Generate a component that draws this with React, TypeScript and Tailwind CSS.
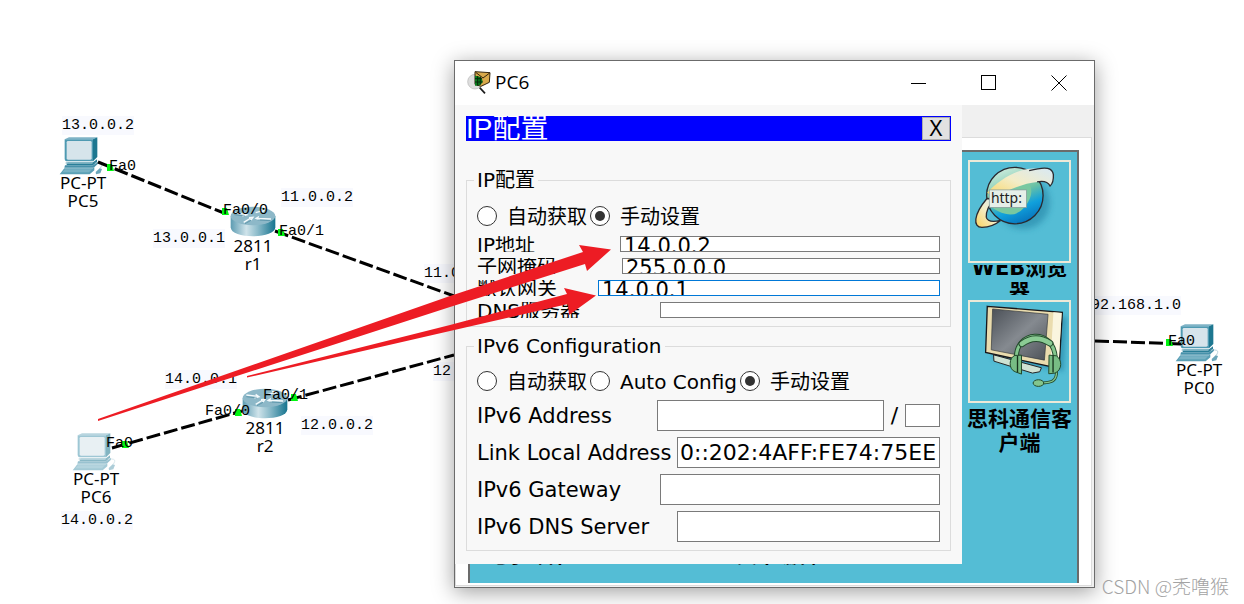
import { useState } from "react";
import type { ReactNode } from "react";
import clsx from "clsx";

interface Device {
  kind: "pc" | "router";
  model: string;
  name: string;
  x: number;
  y: number;
  faded?: boolean;
}

interface CanvasLabel {
  text: string;
  x: number;
  y: number;
}

const devices: Device[] = [
  { kind: "pc", model: "PC-PT", name: "PC5", x: 83, y: 137 },
  { kind: "router", model: "2811", name: "r1", x: 253, y: 206 },
  { kind: "pc", model: "PC-PT", name: "PC6", x: 96, y: 433, faded: true },
  { kind: "router", model: "2811", name: "r2", x: 265, y: 388 },
  { kind: "pc", model: "PC-PT", name: "PC0", x: 1199, y: 324 },
];

const addresses: CanvasLabel[] = [
  { text: "13.0.0.2", x: 62, y: 116 },
  { text: "13.0.0.1", x: 153, y: 229 },
  { text: "11.0.0.2", x: 281, y: 188 },
  { text: "11.0.0.1", x: 424, y: 264 },
  { text: "14.0.0.1", x: 165, y: 370 },
  { text: "12.0.0.2", x: 301, y: 416 },
  { text: "12.0.0.1", x: 433, y: 362 },
  { text: "14.0.0.2", x: 61, y: 511 },
  { text: "192.168.1.0", x: 1082, y: 296 },
];

const ports: CanvasLabel[] = [
  { text: "Fa0", x: 109, y: 157 },
  { text: "Fa0/0", x: 223, y: 201 },
  { text: "Fa0/1", x: 279, y: 222 },
  { text: "Fa0/0", x: 205, y: 402 },
  { text: "Fa0/1", x: 263, y: 386 },
  { text: "Fa0", x: 106, y: 434 },
  { text: "Fa0", x: 1168, y: 332 },
];

const links = [
  [98, 162, 224, 213],
  [275, 231, 454, 296],
  [112, 448, 242, 411],
  [288, 400, 454, 355],
  [1095, 341, 1182, 344],
];

const lights = [
  [110, 168],
  [225, 212],
  [281, 233],
  [238, 413],
  [294, 398],
  [125, 445],
  [1169, 343],
];

function PcIcon({ faded }: { faded?: boolean }) {
  return (
    <svg
      width="44"
      height="38"
      viewBox="58 112 132 114"
      className={clsx("mr-1 -mb-px", faded && "opacity-55")}
      aria-hidden="true"
    >
      <path d="M75 119 88 113H173L160 119Z" fill="#7fb3c6" />
      <path d="M160 119 173 113V172L160 185Z" fill="#1d7790" />
      <path d="M75 119H160V185H80Q75 184 75 178Z" fill="#4f9ab2" />
      <rect x="81" y="124" width="75" height="56" rx="4" fill="#d6e4eb" />
      <path d="M84 188H160L172 179V187L160 197H80Z" fill="#2a7f98" />
      <path d="M78 188H160L158 192H78Z" fill="#8fbccb" />
      <path d="M76 197H160L175 186V192L162 204H74Z" fill="#4691aa" />
      <path d="M74 206H160L164 203V212L150 224H60Z" fill="#5ba0b6" />
      <path d="M76 209H157L148 218H68Z" fill="#78b2c4" />
      <path d="M165 190Q190 188 186 198T180 206" fill="none" stroke="#9fc1cd" strokeWidth="2" />
      <path d="M180 206 187 208 182 221 169 224 168 217Z" fill="#6ba6ba" />
    </svg>
  );
}

function RouterIcon({ id }: { id: string }) {
  return (
    <svg width="46" height="32" viewBox="29 112 138 94" className="-mb-px" aria-hidden="true">
      <defs>
        <linearGradient id={id} x1="0" x2="1">
          <stop offset="0" stopColor="#5d9cb2" />
          <stop offset="0.35" stopColor="#cfe3ea" />
          <stop offset="0.6" stopColor="#8dbccb" />
          <stop offset="1" stopColor="#16748f" />
        </linearGradient>
      </defs>
      <path d="M31 141V175C31 211 165 211 165 175V141Z" fill={`url(#${id})`} />
      <ellipse cx="98" cy="141" rx="67" ry="28" fill="#8db8c8" />
      <path
        d="M42 132 76 136M70 130 80 137 66 141M70 160 88 149 94 152M86 146 98 145 92 153M110 148 152 150M116 143 107 148 118 153M106 131 130 124M119 121 132 123 126 130"
        fill="none"
        stroke="#f4fafc"
        strokeWidth="4"
      />
      <path d="M42 137 74 141M74 164 92 154M112 153 150 155" stroke="#4b8aa0" strokeWidth="2" />
    </svg>
  );
}

function Topology() {
  return (
    <>
      {devices.map((d) => (
        <div
          key={d.name}
          className="absolute flex w-20 -translate-x-1/2 flex-col items-center font-['Noto_Sans',sans-serif] text-[17px] leading-[18px] text-black"
          style={{ left: d.x, top: d.y }}
        >
          {d.kind === "pc" ? <PcIcon faded={d.faded} /> : <RouterIcon id={`body-${d.name}`} />}
          <span>{d.model}</span>
          <span>{d.name}</span>
        </div>
      ))}

      <svg className="absolute inset-0 size-full" aria-hidden="true">
        {links.map(([x1, y1, x2, y2]) => (
          <line
            key={`${x1}-${y1}`}
            x1={x1}
            y1={y1}
            x2={x2}
            y2={y2}
            stroke="#000"
            strokeWidth="3"
            strokeDasharray="14 4"
          />
        ))}
        {lights.map(([x, y]) => (
          <path
            key={`${x}-${y}`}
            d={`M${x - 3} ${y - 4}H${x + 2}L${x + 4} ${y + 3}H${x - 3}Z`}
            fill="#00f510"
          />
        ))}
      </svg>

      {addresses.map((l) => (
        <span
          key={`${l.text}-${l.x}`}
          className="absolute bg-[#f8f9fe] font-['Liberation_Mono',monospace] text-[15px] leading-[19px] text-black"
          style={{ left: l.x, top: l.y }}
        >
          {l.text}
        </span>
      ))}
      {ports.map((l) => (
        <span
          key={`${l.text}-${l.x}`}
          className="absolute font-['Liberation_Mono',monospace] text-[15px] leading-[19px] text-black"
          style={{ left: l.x, top: l.y }}
        >
          {l.text}
        </span>
      ))}
    </>
  );
}

function AppIcon() {
  return (
    <svg width="24" height="24" viewBox="0 0 72 72" aria-hidden="true">
      <circle cx="24" cy="32" r="22" fill="#dedede" stroke="#b5b5b5" strokeWidth="2" />
      <path d="M24 2 69 5 67 34 42 46 24 40Z" fill="#d9a94a" stroke="#33240c" strokeWidth="3" />
      <path d="M26 4 48 21 68 6" fill="none" stroke="#33240c" strokeWidth="3" />
      <path d="M24 14Q46 14 47 32 42 45 24 44Z" fill="#0a7a1c" />
      <path d="M32 15V44M40 17V41M24 23H45M24 33H47" stroke="#04290a" strokeWidth="3" />
      <path d="M38 50 54 67" stroke="#1c1c1c" strokeWidth="5" />
    </svg>
  );
}

function BrowserIcon() {
  return (
    <svg viewBox="30 36 298 298" className="size-full" aria-hidden="true">
      <defs>
        <linearGradient id="globe" x1="0.2" y1="0" x2="0.6" y2="1">
          <stop offset="0" stopColor="#d5efe2" />
          <stop offset="0.5" stopColor="#6bc2a4" />
          <stop offset="0.75" stopColor="#10a0dc" />
          <stop offset="1" stopColor="#0876bd" />
        </linearGradient>
        <linearGradient id="ring" x1="0" y1="1" x2="1" y2="0">
          <stop offset="0" stopColor="#fbd35c" />
          <stop offset="0.5" stopColor="#f3edc8" />
          <stop offset="1" stopColor="#d7e9f6" />
        </linearGradient>
        <filter id="soft">
          <feGaussianBlur stdDeviation="10" />
        </filter>
      </defs>
      <circle cx="190" cy="158" r="80" fill="#2383a5" opacity="0.6" filter="url(#soft)" />
      <circle cx="165" cy="137" r="85" fill="url(#globe)" stroke="#2a2a30" strokeWidth="4" />
      <path d="M100 176Q160 214 194 172T206 98L104 146Z" fill="#79c8a0" />
      <path
        d="M81 146C40 195 38 232 66 233 90 232 110 222 122 212 100 217 82 215 79 202 78 180 90 162 104 147Z"
        fill="url(#ring)"
        stroke="#2a2a30"
        strokeWidth="4"
      />
      <path
        d="M82 128C122 84 185 50 232 56 265 50 278 56 281 74 282 96 276 104 271 108 265 97 252 92 232 96 190 100 136 122 104 146Z"
        fill="url(#ring)"
      />
      <path
        d="M208 62C262 48 278 54 281 74 282 96 276 104 271 108 265 97 252 92 232 96"
        fill="none"
        stroke="#2a2a30"
        strokeWidth="4"
      />
      <rect x="88" y="120" width="112" height="53" fill="#e6efe8" stroke="#7e9493" strokeWidth="2" />
      <text x="93" y="158" fontSize="42" fontWeight="400" fontFamily="Noto Sans, sans-serif" fill="#222">
        http:
      </text>
    </svg>
  );
}

function CommunicatorIcon() {
  return (
    <svg viewBox="30 36 298 298" className="size-full" aria-hidden="true">
      <defs>
        <linearGradient id="screen" x1="0" y1="0" x2="1" y2="1">
          <stop offset="0" stopColor="#4b5057" />
          <stop offset="0.5" stopColor="#858a90" />
          <stop offset="1" stopColor="#4c5157" />
        </linearGradient>
        <filter id="screen-shadow">
          <feGaussianBlur stdDeviation="8" />
        </filter>
      </defs>
      <path d="M95 65 322 82 312 245 100 210Z" fill="#2383a5" opacity="0.6" filter="url(#screen-shadow)" />
      <path d="M101 195 245 234 240 246 218 250 102 214Z" fill="#cfe2d3" stroke="#252525" strokeWidth="3" />
      <path d="M82 49 308 67 298 236 77 188Z" fill="#eadcae" stroke="#17171a" strokeWidth="4" />
      <path d="M281 67 306 69 296 232 272 226Z" fill="#faf5df" />
      <path d="M98 57 265 73 254 211 94 180Z" fill="url(#screen)" stroke="#34383c" strokeWidth="2" />
      <g fill="none" strokeLinecap="round">
        <path d="M170 204C166 124 282 110 287 206" stroke="#234a2c" strokeWidth="15" />
        <path d="M170 204C166 124 282 110 287 206" stroke="#83c58d" strokeWidth="9" />
        <path d="M186 162Q226 131 271 160" stroke="#234a2c" strokeWidth="20" />
        <path d="M186 162Q226 131 271 160" stroke="#8bcb94" strokeWidth="14" />
        <path d="M290 240C294 280 268 278 244 280" stroke="#234a2c" strokeWidth="9" />
        <path d="M290 240C294 280 268 278 244 280" stroke="#83c58d" strokeWidth="4" />
      </g>
      <path d="M165 197C148 202 144 238 166 246L185 253V196Z" fill="#78bd84" stroke="#234a2c" strokeWidth="3" />
      <path d="M173 198V248" stroke="#18331d" strokeWidth="4" />
      <path d="M268 196 290 198C308 210 308 240 286 250L267 252Z" fill="#78bd84" stroke="#234a2c" strokeWidth="3" />
      <path d="M280 198V248" stroke="#18331d" strokeWidth="4" />
      <ellipse cx="236" cy="280" rx="16" ry="10" fill="#83c58d" stroke="#234a2c" strokeWidth="3" />
    </svg>
  );
}

function Radio({
  name,
  label,
  checked,
  onSelect,
}: {
  name: string;
  label: string;
  checked: boolean;
  onSelect: () => void;
}) {
  return (
    <label className="mr-[3px] flex h-5 items-center gap-[10px] whitespace-nowrap">
      <input
        type="radio"
        name={name}
        checked={checked}
        onChange={onSelect}
        className="grid size-5 appearance-none place-items-center rounded-full border border-[#333] bg-white before:size-[10px] before:rounded-full checked:before:bg-[#333]"
      />
      <span className="pt-[2px]">{label}</span>
    </label>
  );
}

function Group({ title, children }: { title: string; children: ReactNode }) {
  return (
    <fieldset className="min-w-0 border border-[#dcdcdc] px-[10px] pb-2">
      <legend className="-ml-[3px] px-[3px] leading-5">{title}</legend>
      {children}
    </fieldset>
  );
}

function ShortField({
  id,
  label,
  value,
  labelClass,
  active,
}: {
  id: string;
  label: string;
  value: string;
  labelClass: string;
  active?: boolean;
}) {
  return (
    <div className="flex h-4 overflow-hidden">
      <label htmlFor={id} className={clsx("shrink-0 leading-[18px] whitespace-nowrap", labelClass)}>
        {label}
      </label>
      <div
        className={clsx(
          "flex min-w-0 flex-1 items-start overflow-hidden border bg-white px-[3px]",
          active ? "border-[#0078d7]" : "border-[#7a7a7a]",
        )}
      >
        <input
          id={id}
          defaultValue={value}
          className="h-[18px] w-full min-w-0 shrink-0 text-[21px] leading-[18px] outline-none"
        />
      </div>
    </div>
  );
}

function LongField({
  id,
  label,
  value,
  labelClass,
  children,
}: {
  id: string;
  label: string;
  value?: string;
  labelClass: string;
  children?: ReactNode;
}) {
  return (
    <div className="flex h-[31px] items-center">
      <label htmlFor={id} className={clsx("shrink-0 text-[21px] whitespace-nowrap", labelClass)}>
        {label}
      </label>
      <input
        id={id}
        defaultValue={value}
        className="h-full min-w-0 flex-1 border border-[#7a7a7a] bg-white px-[2px] text-[22px] outline-none"
      />
      {children}
    </div>
  );
}

function IpConfiguration() {
  const [v4Mode, setV4Mode] = useState("static");
  const [v6Mode, setV6Mode] = useState("static");

  return (
    <form
      className="absolute top-0 left-0 w-[507px] bg-[#f8f8f8] px-[11px] pt-[11px] pb-[13px] font-['DejaVu_Sans','Noto_Sans_CJK_SC',sans-serif] text-[20px] leading-5 text-black"
      onSubmit={(e) => e.preventDefault()}
    >
      <div className="flex h-[25px] items-center justify-between overflow-hidden bg-[#0000ff] pr-px">
        <h2 className="font-['Liberation_Sans','Noto_Sans_CJK_SC',sans-serif] text-[28px] leading-6 text-white">
          IP配置
        </h2>
        <button
          type="button"
          aria-label="Close"
          className="h-[23px] w-7 border border-[#adadad] bg-[#e1e1e1] pb-1 font-['Noto_Sans',sans-serif] text-[22px] leading-4"
        >
          X
        </button>
      </div>

      <div className="mt-[29px]">
        <Group title="IP配置">
          <div className="mt-4 flex">
            <Radio name="v4" label="自动获取" checked={v4Mode === "dhcp"} onSelect={() => setV4Mode("dhcp")} />
            <Radio name="v4" label="手动设置" checked={v4Mode === "static"} onSelect={() => setV4Mode("static")} />
          </div>
          <div className="mt-[10px] flex flex-col gap-[6px]">
            <ShortField id="ip" label="IP地址" value="14.0.0.2" labelClass="w-[143px]" />
            <ShortField id="mask" label="子网掩码" value="255.0.0.0" labelClass="w-[145px]" />
            <ShortField id="gateway" label="默认网关" value="14.0.0.1" labelClass="w-[121px]" active />
            <ShortField id="dns" label="DNS服务器" value="" labelClass="w-[183px]" />
          </div>
        </Group>
      </div>

      <div className="mt-[9px]">
        <Group title="IPv6 Configuration">
          <div className="mt-[15px] flex">
            <Radio name="v6" label="自动获取" checked={v6Mode === "dhcp"} onSelect={() => setV6Mode("dhcp")} />
            <Radio name="v6" label="Auto Config" checked={v6Mode === "auto"} onSelect={() => setV6Mode("auto")} />
            <Radio name="v6" label="手动设置" checked={v6Mode === "static"} onSelect={() => setV6Mode("static")} />
          </div>
          <div className="mt-[9px] flex flex-col gap-[6px]">
            <LongField id="v6-address" label="IPv6 Address" labelClass="w-[180px]">
              <span className="w-[21px] text-center text-[22px]">/</span>
              <input
                aria-label="Prefix length"
                className="h-[23px] w-[35px] border border-[#7a7a7a] bg-white px-[2px] outline-none"
              />
            </LongField>
            <LongField id="v6-local" label="Link Local Address" value="0::202:4AFF:FE74:75EE" labelClass="w-[200px]" />
            <LongField id="v6-gateway" label="IPv6 Gateway" labelClass="w-[183px]" />
            <LongField id="v6-dns" label="IPv6 DNS Server" labelClass="w-[200px]" />
          </div>
        </Group>
      </div>
    </form>
  );
}

function PcWindow() {
  return (
    <section className="absolute top-[60px] left-[454px] flex h-[528px] w-[641px] flex-col border border-[#6b6b6b] bg-[#f0f0f0] shadow-[0_4px_20px_rgba(0,0,0,0.38)]">
      <header className="flex h-11 shrink-0 items-center bg-white pl-3">
        <AppIcon />
        <h1 className="ml-1 flex-1 pb-[2px] font-['Open_Sans',sans-serif] text-[19px] leading-6 text-black">PC6</h1>
        <button type="button" aria-label="Minimize" className="grid h-full w-[70px] place-items-center">
          <svg width="16" height="16" viewBox="0 0 16 16" stroke="#000" fill="none">
            <path d="M0 8.5H15" />
          </svg>
        </button>
        <button type="button" aria-label="Maximize" className="grid h-full w-[70px] place-items-center">
          <svg width="16" height="16" viewBox="0 0 16 16" stroke="#000" fill="none">
            <rect x="0.5" y="0.5" width="14" height="14" />
          </svg>
        </button>
        <button type="button" aria-label="Close" className="grid h-full w-[70px] place-items-center">
          <svg width="16" height="16" viewBox="0 0 16 16" stroke="#000" fill="none">
            <path d="M0.5 0.5 15.500 15.500M15.500 0.5 0.5 15.500" />
          </svg>
        </button>
      </header>

      <div className="relative flex min-h-0 flex-1 flex-col pt-8 pr-[2px] pb-px">
        <div className="flex min-h-0 flex-1 border border-[#dcdcdc] bg-white pt-3 pr-3 pb-[2px] pl-3">
          <div className="flex flex-1 items-end overflow-hidden border-2 border-b-0 border-[#6b6b6b] bg-[#54bdd5] font-['DejaVu_Sans','Noto_Sans_CJK_SC',sans-serif] text-[20px] font-bold text-black">
            <span className="mb-[15px] ml-[17px] leading-6">电子邮件</span>
            <span className="mb-[15px] ml-[170px] leading-6">文本编辑</span>
            <div className="ml-auto flex w-[115px] flex-col items-center self-start pt-2 text-[21px]">
              <a href="#browser" className="flex flex-col items-center">
                <span className="size-[103px] border-2 border-[#ece9d8]">
                  <BrowserIcon />
                </span>
                <span className="mt-[2px] flex h-[30px] w-[106px] items-center overflow-hidden text-center leading-6">
                  WEB浏览器
                </span>
              </a>
              <a href="#communicator" className="mt-[5px] flex flex-col items-center">
                <span className="size-[103px] border-2 border-[#ece9d8]">
                  <CommunicatorIcon />
                </span>
                <span className="mt-1 w-[106px] text-center leading-6">思科通信客户端</span>
              </a>
            </div>
          </div>
        </div>
        <IpConfiguration />
      </div>
    </section>
  );
}

export default function App() {
  return (
    <main className="relative h-screen w-full overflow-hidden bg-white">
      <Topology />
      <PcWindow />

      {/* annotation arrows from PC6 and its gateway to the matching fields */}
      <svg className="pointer-events-none absolute inset-0 size-full" fill="#ed1c24" aria-hidden="true">
        <path d="M98 419 450 296 583 252 579 245 611 249.500 587 271 585 264 450 307 98 421Z" />
        <path d="M247 376 450 325 567 294 564 288 596 295.500 569 315 568 304 450 331 247 377.500Z" />
      </svg>

      <p className="absolute right-[15px] bottom-[6px] font-['Noto_Sans_CJK_SC',sans-serif] text-[19px] leading-6 font-light text-[#a3a3a3]">
        CSDN @秃噜猴
      </p>
    </main>
  );
}
